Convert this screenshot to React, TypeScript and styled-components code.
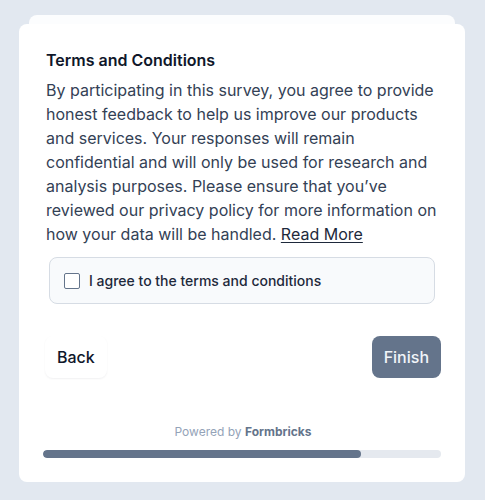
import React from "react";
import styled, { createGlobalStyle } from "styled-components";

const Global = createGlobalStyle`
  html, body { margin: 0; padding: 0; background: #e2e8f0; }
  body { font-family: Inter, "Noto Sans", sans-serif; -webkit-font-smoothing: antialiased; }
  * { box-sizing: border-box; }
`;

const Page = styled.div`
  width: 485px;
  height: 500px;
  background: #e2e8f0;
  padding: 24px 20px 0 19px;
`;

const Stack = styled.div`
  position: relative;
  width: 446px;
`;

const BackCard = styled.div`
  position: absolute;
  left: 10px;
  right: 10px;
  top: -9px;
  height: 30px;
  background: #ffffff;
  border-radius: 8px;
  opacity: 0.9;
`;

const Card = styled.div`
  position: relative;
  background: #ffffff;
  border-radius: 8px;
  padding: 24px 24px 24px 24px;
  display: flex;
  flex-direction: column;
`;

const Question = styled.div`
  padding: 0 0 0 3px;
  display: flex;
  flex-direction: column;
  gap: 6px;
`;

const Title = styled.h1`
  margin: 0;
  font-size: 16px;
  line-height: 24px;
  font-weight: 600;
  color: #0f172a;
`;

const Body = styled.p`
  margin: 0;
  font-size: 16px;
  line-height: 24px;
  font-weight: 400;
  color: #334155;
`;

const Link = styled.a`
  color: #1e293b;
  text-decoration: underline;
  text-underline-offset: 2px;
  text-decoration-thickness: 1px;
`;

const AgreeBox = styled.label`
  margin: 11px 6px 0 6px;
  display: flex;
  align-items: center;
  gap: 9px;
  height: 47px;
  padding: 0 14px;
  border: 1px solid #d6dce4;
  border-radius: 8px;
  background: #f8fafc;
  cursor: pointer;
`;

const Check = styled.span`
  width: 16px;
  height: 16px;
  border: 1px solid #64748b;
  border-radius: 2px;
  background: #ffffff;
  flex-shrink: 0;
`;

const AgreeText = styled.span`
  font-size: 14px;
  line-height: 20px;
  font-weight: 500;
  color: #1e293b;
`;

const Buttons = styled.div`
  margin-top: 32px;
  display: flex;
  justify-content: space-between;
  align-items: center;
  padding-left: 2px;
`;

const Button = styled.button<{ $primary?: boolean }>`
  font-family: inherit;
  font-size: 16px;
  line-height: 18px;
  font-weight: 500;
  padding: 12px 12px;
  border-radius: 8px;
  border: none;
  cursor: pointer;
  background: ${(p) => (p.$primary ? "#64748b" : "#ffffff")};
  color: ${(p) => (p.$primary ? "#f1f5f9" : "#0f172a")};
  box-shadow: ${(p) => (p.$primary ? "none" : "0 1px 2px rgba(15, 23, 42, 0.06)")};
`;

const Powered = styled.div`
  margin-top: 46px;
  text-align: center;
  font-size: 12px;
  line-height: 16px;
  color: #94a3b8;
  padding-left: 2px;
`;

const Brand = styled.b`
  font-weight: 700;
  color: #64748b;
`;

const Track = styled.div`
  margin-top: 10px;
  height: 8px;
  border-radius: 999px;
  background: #e5e9ef;
  overflow: hidden;
`;

const Fill = styled.div`
  height: 100%;
  border-radius: 999px;
  background: #64748b;
`;

export default function App() {
  const progress = 0.8;
  return (
    <Page>
      <Global />
      <Stack>
        <BackCard />
        <Card>
          <Question>
            <Title>Terms and Conditions</Title>
            <Body>
              By participating in this survey, you agree to provide honest feedback to help us improve our
              products and services. Your responses will remain confidential and will only be used for
              research and analysis purposes. Please ensure that you’ve reviewed our privacy policy for more
              information on how your data will be handled. <Link>Read More</Link>
            </Body>
          </Question>
          <AgreeBox>
            <Check />
            <AgreeText>I agree to the terms and conditions</AgreeText>
          </AgreeBox>
          <Buttons>
            <Button>Back</Button>
            <Button $primary>Finish</Button>
          </Buttons>
          <Powered>
            Powered by <Brand>Formbricks</Brand>
          </Powered>
          <Track>
            <Fill style={{ width: `${progress * 100}%` }} />
          </Track>
        </Card>
      </Stack>
    </Page>
  );
}
